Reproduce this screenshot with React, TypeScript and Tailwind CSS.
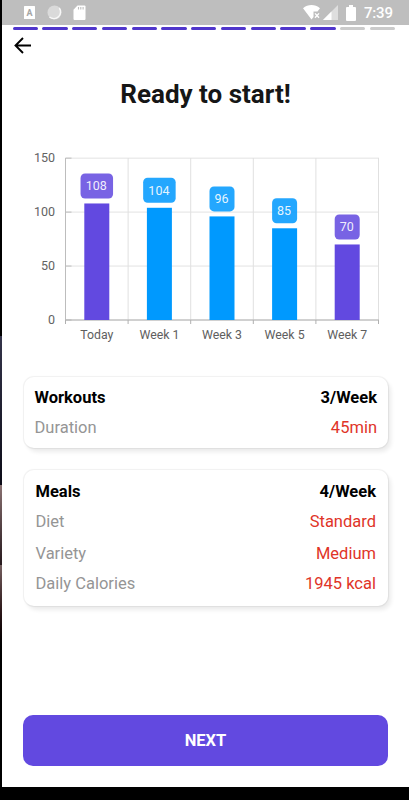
const STEPS = 13;
const STEPS_DONE = 11;

const PURPLE = '#6249e0';
const BLUE = '#0099fe';

const bars = [
  { label: 'Today', value: 108, color: PURPLE },
  { label: 'Week 1', value: 104, color: BLUE },
  { label: 'Week 3', value: 96, color: BLUE },
  { label: 'Week 5', value: 85, color: BLUE },
  { label: 'Week 7', value: 70, color: PURPLE },
];

function StatusBar() {
  return (
    <div className="flex h-[25px] items-center bg-[#bebebe] pr-4 pl-[22px] text-white">
      <svg width="11" height="13" viewBox="0 0 11 13" className="shrink-0">
        <rect width="11" height="13" rx="0.5" fill="#fff" />
        <text
          x="5.5"
          y="9.6"
          textAnchor="middle"
          fontSize="9"
          fontWeight="700"
          fill="#a5a5a5"
          fontFamily="Roboto, sans-serif"
        >
          A
        </text>
      </svg>
      <svg width="15" height="15" viewBox="0 0 15 15" className="ml-3 shrink-0">
        <circle cx="7.5" cy="7.5" r="7" fill="#dadada" />
        <path
          d="M2.5 12A6.7 6.7 0 0 0 12.3 3"
          fill="none"
          stroke="#f8f8f8"
          strokeWidth="1.4"
        />
      </svg>
      <svg width="13" height="16" viewBox="0 0 13 16" className="ml-[11px] shrink-0">
        <path
          d="M4.5 0.5H11.5Q12.5 0.5 12.5 1.5V14Q12.5 15 11.5 15H1.5Q0.5 15 0.5 14V4.8Z"
          fill="#fff"
        />
        <path d="M5.5 2v2.5M7.8 2v2.5M10.1 2v2.5" stroke="#bebebe" strokeWidth="1.1" />
      </svg>
      <svg
        width="18"
        height="15"
        viewBox="0 0 18 15"
        className="ml-auto shrink-0"
      >
        <path
          d="M0 3.3C5-1 12-1 17 3.3L14.5 6.5H10.5V12L8.5 14.5Z"
          fill="#fff"
        />
        <path d="M12 8.4l4 4.4M16 8.4L12 12.8" stroke="#fff" strokeWidth="1.4" />
      </svg>
      <svg width="15" height="15" viewBox="0 0 15 15" className="ml-[2px] shrink-0">
        <path d="M15 0V15H0Z" fill="#dedede" />
        <path d="M8.5 6.5V15H0Z" fill="#fff" />
      </svg>
      <svg width="10" height="16" viewBox="0 0 10 16" className="ml-2 shrink-0">
        <path
          d="M3 0H7V2H9Q10 2 10 3V15Q10 16 9 16H1Q0 16 0 15V3Q0 2 1 2H3Z"
          fill="#fff"
        />
      </svg>
      <span className="mt-[2px] ml-[8px] w-[29px] text-[15px] leading-none font-medium tracking-[-0.2px] whitespace-nowrap">
        7:39
      </span>
    </div>
  );
}

function Progress() {
  return (
    <div className="mt-[2px] mr-[14px] ml-[10.5px] flex gap-[4.4px]">
      {Array.from({ length: STEPS }, (_, i) => (
        <div
          key={i}
          className={`h-[3px] flex-1 rounded-full ${i < STEPS_DONE ? 'bg-[#5036cc]' : 'bg-[#cbcbcb]'}`}
        />
      ))}
    </div>
  );
}

function WeightChart() {
  const left = 43.5;
  const step = 62.6;
  const base = 170;
  const scale = 1.079;

  return (
    <svg
      width="365"
      height="200"
      viewBox="0 0 365 200"
      className="mt-10 ml-5 block shrink-0"
      fontFamily="Roboto, sans-serif"
      fontSize="12.5"
    >
      {[150, 100, 50, 0].map((tick) => {
        const y = base - tick * scale;
        return (
          <g key={tick}>
            <path d={`M${left} ${y}H357`} stroke="#e2e2e2" />
            <path d={`M${left} ${y}h6`} stroke="#bdbdbd" />
            <text x="33" y={y + 4} textAnchor="end" fill="#636363">
              {tick}
            </text>
          </g>
        );
      })}
      {[0, 1, 2, 3, 4, 5].map((i) => (
        <g key={i}>
          <path
            d={`M${left + i * step} 8V${base}`}
            stroke={i === 0 ? '#bdbdbd' : '#e0e0e0'}
          />
          <path d={`M${left + i * step} ${base}v4`} stroke="#b0b0b0" />
        </g>
      ))}
      <path d={`M${left} ${base}H357`} stroke="#b0b0b0" />
      {bars.map((bar, i) => {
        const x = left + step * (i + 0.5);
        const y = base - bar.value * scale;
        const w = bar.value >= 100 ? 32.5 : 25;
        return (
          <g key={bar.label}>
            <rect
              x={x - 12.5}
              y={y}
              width="25"
              height={base - y}
              fill={bar.color}
            />
            <rect
              x={x - w / 2}
              y={y - 30}
              width={w}
              height="25"
              rx="4.5"
              fill={bar.color}
              fillOpacity="0.86"
            />
            <text x={x - 0.5} y={y - 13.2} textAnchor="middle" fill="#fff" fillOpacity="0.9">
              {bar.value}
            </text>
            <text
              x={x}
              y="189"
              textAnchor="middle"
              fontSize="12.3"
              fill="#5e5e5e"
            >
              {bar.label}
            </text>
          </g>
        );
      })}
    </svg>
  );
}

function Row({ label, value }: { label: string; value: string }) {
  return (
    <div className="flex justify-between">
      <span className="text-[#959595]">{label}</span>
      <span className="text-[#e03428]">{value}</span>
    </div>
  );
}

const cardClass =
  'mr-[21px] ml-[21.5px] shrink-0 rounded-[10px] bg-white text-[16.5px] leading-5 shadow-[3px_4px_4px_0px_rgba(0,0,0,0.08),0_0_1px_1px_rgba(0,0,0,0.06)]';

export default function App() {
  return (
    <div className="flex h-[800px] w-[409px] flex-col overflow-hidden bg-black font-[Roboto,sans-serif]">
      <div className="flex h-[787px]">
        <div className="flex w-[2px] shrink-0 flex-col pt-[336px]">
          <div className="h-[149px] bg-linear-to-b from-[#34344a] to-[#0c0c18]" />
          <div className="h-[80px] bg-linear-to-b from-[#8a7272] to-[#271a1e]" />
          <div className="h-[95px] bg-linear-to-b from-[#756060] via-[#2a1618] to-black" />
        </div>
        <div className="flex min-w-0 flex-1 flex-col bg-white">
          <StatusBar />
          <Progress />
          <button className="mt-[7px] ml-[12px] h-[17px] w-[18px]">
            <svg
              width="18"
              height="17"
              viewBox="0 0 18 17"
              fill="none"
              stroke="#000"
              strokeWidth="1.9"
            >
              <path d="M17 8.5H2M9 1L1.5 8.5L9 16" />
            </svg>
          </button>
          <h1 className="mt-6 text-center text-[26px] leading-8 font-bold text-[#161616]">
            Ready to start!
          </h1>
          <WeightChart />

          <section className={`${cardClass} mt-[27px] h-[71px] pt-[11px] pr-[11px] pl-[11px]`}>
            <div className="flex justify-between font-bold text-black">
              <span>Workouts</span>
              <span>3/Week</span>
            </div>
            <div className="mt-[10px]">
              <Row label="Duration" value="45min" />
            </div>
          </section>

          <section className={`${cardClass} mt-[22px] h-[136px] pt-[12px] pr-3 pl-3`}>
            <div className="flex justify-between font-bold text-black">
              <span>Meals</span>
              <span>4/Week</span>
            </div>
            <div className="mt-[10px]">
              <Row label="Diet" value="Standard" />
            </div>
            <div className="mt-[12px]">
              <Row label="Variety" value="Medium" />
            </div>
            <div className="mt-[10px]">
              <Row label="Daily Calories" value="1945 kcal" />
            </div>
          </section>

          <button className="mt-auto mr-[21px] mb-[21px] ml-[21px] h-[51px] shrink-0 rounded-[10px] bg-[#6249e0] pt-[2px] text-[16.5px] font-bold text-white">
            NEXT
          </button>
        </div>
      </div>
    </div>
  );
}
